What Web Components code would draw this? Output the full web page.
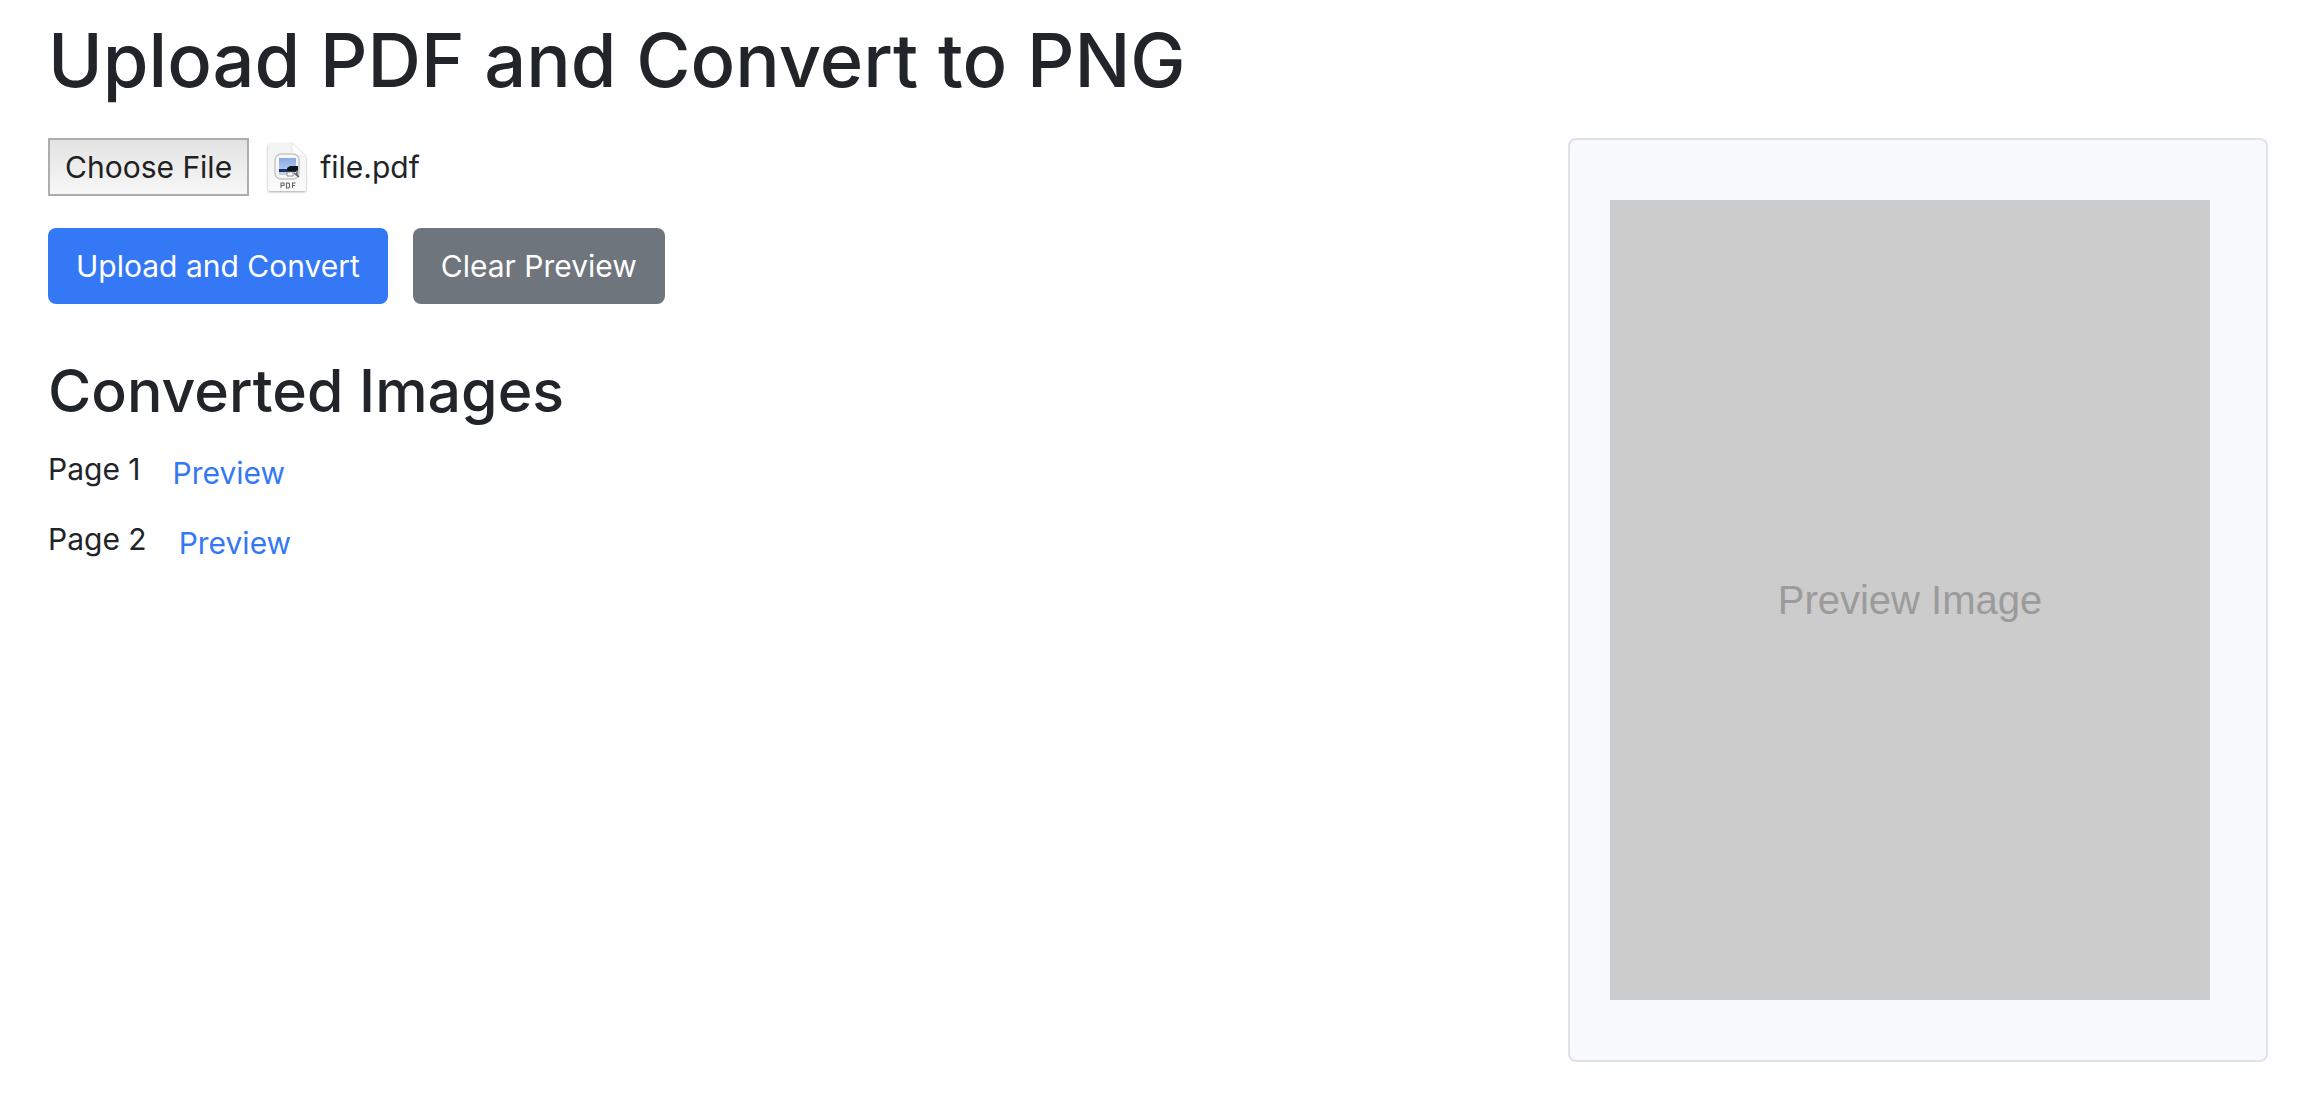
<!DOCTYPE html>
<html lang="en">
<head>
<meta charset="utf-8">
<title>Upload PDF and Convert to PNG</title>
<style>
  body { margin: 0; background: #fff; color: #212529; font: 400 30px/48px Inter, "Liberation Sans", sans-serif; }
</style>
</head>
<body>
<pdf-converter>
  <file-picker slot="form" filename="file.pdf"></file-picker>
  <action-button slot="actions" variant="primary">Upload and Convert</action-button>
  <action-button slot="actions">Clear Preview</action-button>
  <page-row slot="pages">Page 1</page-row>
  <page-row slot="pages">Page 2</page-row>
  <preview-panel slot="preview">Preview Image</preview-panel>
</pdf-converter>
<script>
const attach = (host, html) => { host.attachShadow({ mode: "open" }).innerHTML = html; return host.shadowRoot; };

customElements.define("pdf-converter", class extends HTMLElement {
  constructor() {
    super();
    attach(this, `
      <style>
        :host { display: block; padding: 12px 52px 40px 48px; }
        h1, h2 { margin: 0; font-weight: 500; }
        h1 { font-size: 74px; line-height: 96px; margin-bottom: 30px; }
        h2 { font-size: 59px; line-height: 76px; margin: 49px 0 16px; }
        .columns { display: flex; align-items: flex-start; justify-content: space-between; gap: 24px; }
        main { flex: 1; min-width: 0; }
        .actions { display: flex; flex-wrap: wrap; gap: 25px; margin-top: 32px; }
        .pages { display: grid; gap: 16px; }
      </style>
      <h1>Upload PDF and Convert to PNG</h1>
      <div class="columns">
        <main>
          <slot name="form"></slot>
          <div class="actions"><slot name="actions"></slot></div>
          <h2>Converted Images</h2>
          <div class="pages"><slot name="pages"></slot></div>
        </main>
        <slot name="preview"></slot>
      </div>`);
  }
});

customElements.define("file-picker", class extends HTMLElement {
  constructor() {
    super();
    const root = attach(this, `
      <style>
        :host { display: flex; align-items: center; height: 58px; }
        button { box-sizing: border-box; height: 58px; padding: 0 15px; border: 2px solid #adadad; border-radius: 0;
          background: linear-gradient(#e3e3e3, #f7f7f7); color: #212121; font: inherit; }
        svg { width: 46px; height: 56px; margin: 0 9px 0 16px; }
      </style>
      <input type="file" accept="application/pdf" aria-label="PDF file" hidden>
      <button type="button">Choose File</button>
      <svg viewBox="0 0 46 56" aria-hidden="true">
        <defs>
          <linearGradient id="sky" x2="0" y2="1"><stop stop-color="#87a9e2"/><stop offset="1" stop-color="#b5caf1"/></linearGradient>
          <linearGradient id="paper" x2="0" y2="1"><stop stop-color="#f3f3f3"/><stop offset="1" stop-color="#fafafa"/></linearGradient>
          <filter id="shade" x="-20%" y="-20%" width="140%" height="140%"><feDropShadow dx="0" dy="1" stdDeviation="1" flood-opacity=".35"/></filter>
          <filter id="soft"><feGaussianBlur stdDeviation=".4"/></filter>
        </defs>
        <path filter="url(#shade)" fill="url(#paper)" d="M5 4h22l14 14v32a2 2 0 0 1-2 2H5a2 2 0 0 1-2-2V6a2 2 0 0 1 2-2z"/>
        <path fill="#fff" stroke="#d8d8d8" stroke-width=".6" d="M27 4v11a2 2 0 0 0 2 2h12z"/>
        <g filter="url(#soft)">
          <rect x="10" y="15" width="24" height="25" rx="6" fill="#f8f8f8" stroke="#c5c7c9" stroke-width="1.5"/>
          <path fill="url(#sky)" d="M14 19h17v12H14z"/>
          <path fill="#16306f" d="M14 30h17v3H14z"/>
          <path fill="#c1d0dc" d="M14 33h9v3h-9z"/>
          <path fill="#10161d" d="M22 29l3-2h8v5h-4l-2 2h-4z"/>
          <path fill="#fff" stroke="#777d84" stroke-width=".8" d="M22 33h6v4h-6z"/>
          <path stroke="#555b61" stroke-width="1.5" d="M29 34l5 4m-2-7v5" fill="none"/>
          <path fill="none" stroke="#666" stroke-width="1.1" d="M16 49v-5h3v2.500h-3m5.500-2.500v5h2l1-1v-3l-1-1zm6 5v-5h3m-3 2.500h2.500"/>
        </g>
      </svg>
      <output></output>`);
    const input = root.querySelector("input"), name = root.querySelector("output");
    name.textContent = this.getAttribute("filename");
    root.querySelector("button").onclick = () => input.click();
    input.onchange = () => { if (input.files[0]) name.textContent = input.files[0].name; };
  }
});

customElements.define("action-button", class extends HTMLElement {
  constructor() {
    super();
    attach(this, `
      <style>
        :host { display: block; }
        button { height: 76px; padding: 0 28px; border: 0; border-radius: 8px; background: #6e757c; color: #fff; font: inherit; }
        :host([variant="primary"]) button { background: #3578f6; }
      </style>
      <button type="button"><slot></slot></button>`);
  }
});

customElements.define("page-row", class extends HTMLElement {
  constructor() {
    super();
    attach(this, `
      <style>
        :host { display: flex; align-items: flex-start; gap: 32px; height: 54px; }
        a { padding-top: 4px; color: #3578f6; text-decoration: none; }
      </style>
      <span><slot></slot></span><a href="#preview">Preview</a>`);
  }
});

customElements.define("preview-panel", class extends HTMLElement {
  constructor() {
    super();
    attach(this, `
      <style>
        :host { display: block; padding: 60px 56px 60px 40px; border: 2px solid #dfe2e8; border-radius: 8px; background: #f8f9fb; }
        .image { display: grid; place-items: center; width: 600px; aspect-ratio: 3 / 4; background: #ccc; color: #9b9b9b;
          font: 40px/48px "Liberation Sans", Arial, sans-serif; }
      </style>
      <div class="image" id="preview"><span><slot></slot></span></div>`);
  }
});
</script>
</body>
</html>
